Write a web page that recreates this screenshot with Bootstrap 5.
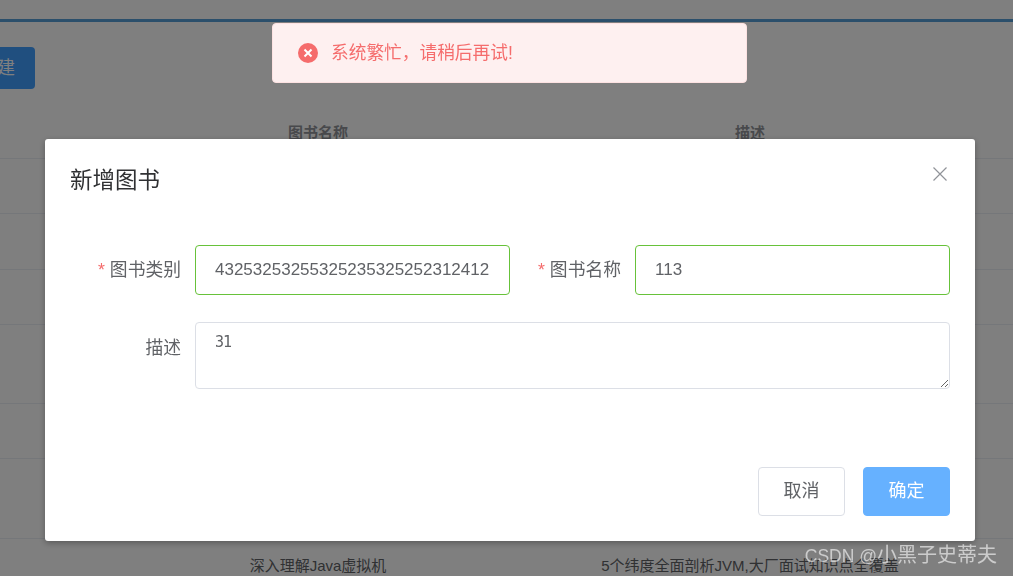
<!DOCTYPE html>
<html lang="zh">
<head>
  <meta charset="UTF-8">
  <title>新增图书</title>
  <link href="https://cdn.jsdelivr.net/npm/bootstrap@5.3.0/dist/css/bootstrap.min.css" rel="stylesheet">
  <style>
    html, body {
      height: 100%;
      overflow: hidden;
    }
    body {
      font-family: "Liberation Sans", "Noto Sans CJK SC", sans-serif;
      color: #606266;
      background: #fff;
    }

    /* Page behind the dialog */
    .top-bar {
      height: 22px;
      border-bottom: 3px solid #569ed6;
    }
    .tool-row {
      height: 86px;
      padding-top: 25px;
    }
    .btn-new {
      margin-left: -40px;
      height: 42px;
      padding: 0 20px 0 19px;
      font-size: 18px;
      line-height: 42px;
      color: #fff;
      background: #409eff;
      border: 0;
      border-radius: 4px;
    }
    .book-table {
      table-layout: fixed;
      width: 1013px;
      margin: 0;
      font-size: 15px;
    }
    .book-table th, .book-table td {
      padding: 0;
      text-align: center;
      vertical-align: middle;
      border-bottom: 1px solid #ebeef5;
      box-shadow: none;
      color: #606266;
    }
    .book-table th {
      height: 50px;
      padding-top: 1px;
      color: #909399;
      font-weight: 700;
    }
    .col-a { width: 103px; }
    .col-b { width: 430px; }
    .col-c { width: 434px; }
    .row-s td { height: 55px; }
    .row-m td { height: 56px; }
    .row-l td { height: 79px; }
    .row-x td { height: 80px; }

    /* Dialog */
    .book-dialog {
      width: 930px;
      max-width: none;
      margin: 139px 0 0 45px;
    }
    .book-dialog .modal-content {
      height: 402px;
      border: 0;
      border-radius: 3px;
      box-shadow: 0 2px 6px rgba(0, 0, 0, .3);
    }
    .book-dialog .modal-header {
      padding: 27px 25px 0;
      border: 0;
      align-items: flex-start;
    }
    .book-dialog .modal-title {
      font-size: 22.5px;
      line-height: 29px;
      font-weight: 400;
      color: #303133;
    }
    .close-x {
      width: 14px;
      height: 14px;
      margin: 1px 3px 0 0;
      padding: 0;
      background: none;
      border: 0;
      line-height: 0;
    }
    .book-form {
      display: grid;
      grid-template-columns: 111px 315px 97px 315px;
      column-gap: 14px;
      row-gap: 27px;
      padding: 50px 25px 0;
    }
    .field-label {
      margin: 0;
      font-size: 17.8px;
      line-height: 50px;
      text-align: right;
      white-space: nowrap;
      color: #606266;
    }
    .req {
      margin-right: 5px;
      color: #f56c6c;
    }
    .book-form .form-control {
      border-radius: 4px;
      color: #606266;
      box-shadow: none;
    }
    .book-input {
      height: 50px;
      padding: 0 20px 0 19px;
      font-size: 17px;
      border: 1px solid #67c23a;
    }
    .book-area {
      grid-column: 2 / -1;
      height: 67px;
      min-height: 67px;
      padding: 8px 19px;
      font-family: "DejaVu Sans Mono", monospace;
      font-size: 15px;
      line-height: 22px;
      letter-spacing: -1px;
      border: 1px solid #dcdfe6;
      resize: vertical;
    }
    .area-label {
      padding-top: 1px;
    }
    .book-foot {
      margin-top: auto;
      padding: 0 25px 25px;
      gap: 18px;
    }
    .foot-btn {
      width: 87px;
      height: 49px;
      padding: 0;
      font-size: 18px;
      border-radius: 4px;
    }
    .btn-cancel {
      color: #606266;
      background: #fff;
      border: 1px solid #dcdfe6;
    }
    .btn-ok {
      color: #fff;
      background: #66b1ff;
      border: 1px solid #66b1ff;
    }

    /* Message on top of the dialog */
    .err-msg {
      position: fixed;
      top: 23px;
      left: 272px;
      width: 475px;
      height: 60px;
      margin: 0;
      padding: 0 0 0 25px;
      z-index: 2000;
      font-size: 17.7px;
      color: #f56c6c;
      background: #fef0f0;
      border: 1px solid #fde2e2;
      border-radius: 4px;
    }
    .err-msg svg {
      margin-right: 13px;
    }
    .mark-text {
      position: fixed;
      right: 16px;
      bottom: 6px;
      z-index: 2100;
      font-size: 20px;
      line-height: 28px;
      white-space: nowrap;
      color: rgba(255, 255, 255, .6);
    }
    .mark-latin {
      font-size: 17.5px;
    }
  </style>
</head>
<body>
  <div class="top-bar"></div>
  <div class="tool-row">
    <button type="button" class="btn-new">新建</button>
  </div>
  <table class="table book-table">
    <colgroup>
      <col class="col-a"><col class="col-b"><col class="col-c"><col>
    </colgroup>
    <thead>
      <tr><th></th><th>图书名称</th><th>描述</th><th></th></tr>
    </thead>
    <tbody>
      <tr class="row-s"><td></td><td></td><td></td><td></td></tr>
      <tr class="row-m"><td></td><td></td><td></td><td></td></tr>
      <tr class="row-s"><td></td><td></td><td></td><td></td></tr>
      <tr class="row-l"><td></td><td></td><td></td><td></td></tr>
      <tr class="row-s"><td></td><td></td><td></td><td></td></tr>
      <tr class="row-x"><td></td><td></td><td></td><td></td></tr>
      <tr class="row-m"><td></td><td>深入理解Java虚拟机</td><td>5个纬度全面剖析JVM,大厂面试知识点全覆盖</td><td></td></tr>
    </tbody>
  </table>

  <div class="modal-backdrop show"></div>
  <div class="modal d-block">
    <div class="modal-dialog book-dialog">
      <div class="modal-content">
        <div class="modal-header">
          <h5 class="modal-title">新增图书</h5>
          <button type="button" class="close-x ms-auto" aria-label="关闭">
            <svg width="14" height="14" viewBox="0 0 14 14"><path d="M.5.5l13 13M13.5.5l-13 13" stroke="#909399" stroke-width="1.2" fill="none"/></svg>
          </button>
        </div>
        <form class="book-form">
          <label class="field-label"><span class="req">*</span>图书类别</label>
          <input type="text" class="form-control book-input" value="43253253255325235325252312412535">
          <label class="field-label"><span class="req">*</span>图书名称</label>
          <input type="text" class="form-control book-input" value="113">
          <label class="field-label area-label">描述</label>
          <textarea class="form-control book-area">31</textarea>
        </form>
        <div class="d-flex justify-content-end book-foot">
          <button type="button" class="btn foot-btn btn-cancel">取消</button>
          <button type="button" class="btn foot-btn btn-ok">确定</button>
        </div>
      </div>
    </div>
  </div>

  <div class="d-flex align-items-center err-msg">
    <svg width="20" height="20" viewBox="0 0 20 20"><circle cx="10" cy="10" r="10" fill="#f56c6c"/><path d="M6.5 6.5l7 7M13.5 6.5l-7 7" stroke="#fff" stroke-width="2" fill="none"/></svg>
    <span>系统繁忙，请稍后再试!</span>
  </div>
  <div class="mark-text"><span class="mark-latin">CSDN @</span>小黑子史蒂夫</div>

  <script src="https://cdn.jsdelivr.net/npm/bootstrap@5.3.0/dist/js/bootstrap.bundle.min.js"></script>
</body>
</html>
